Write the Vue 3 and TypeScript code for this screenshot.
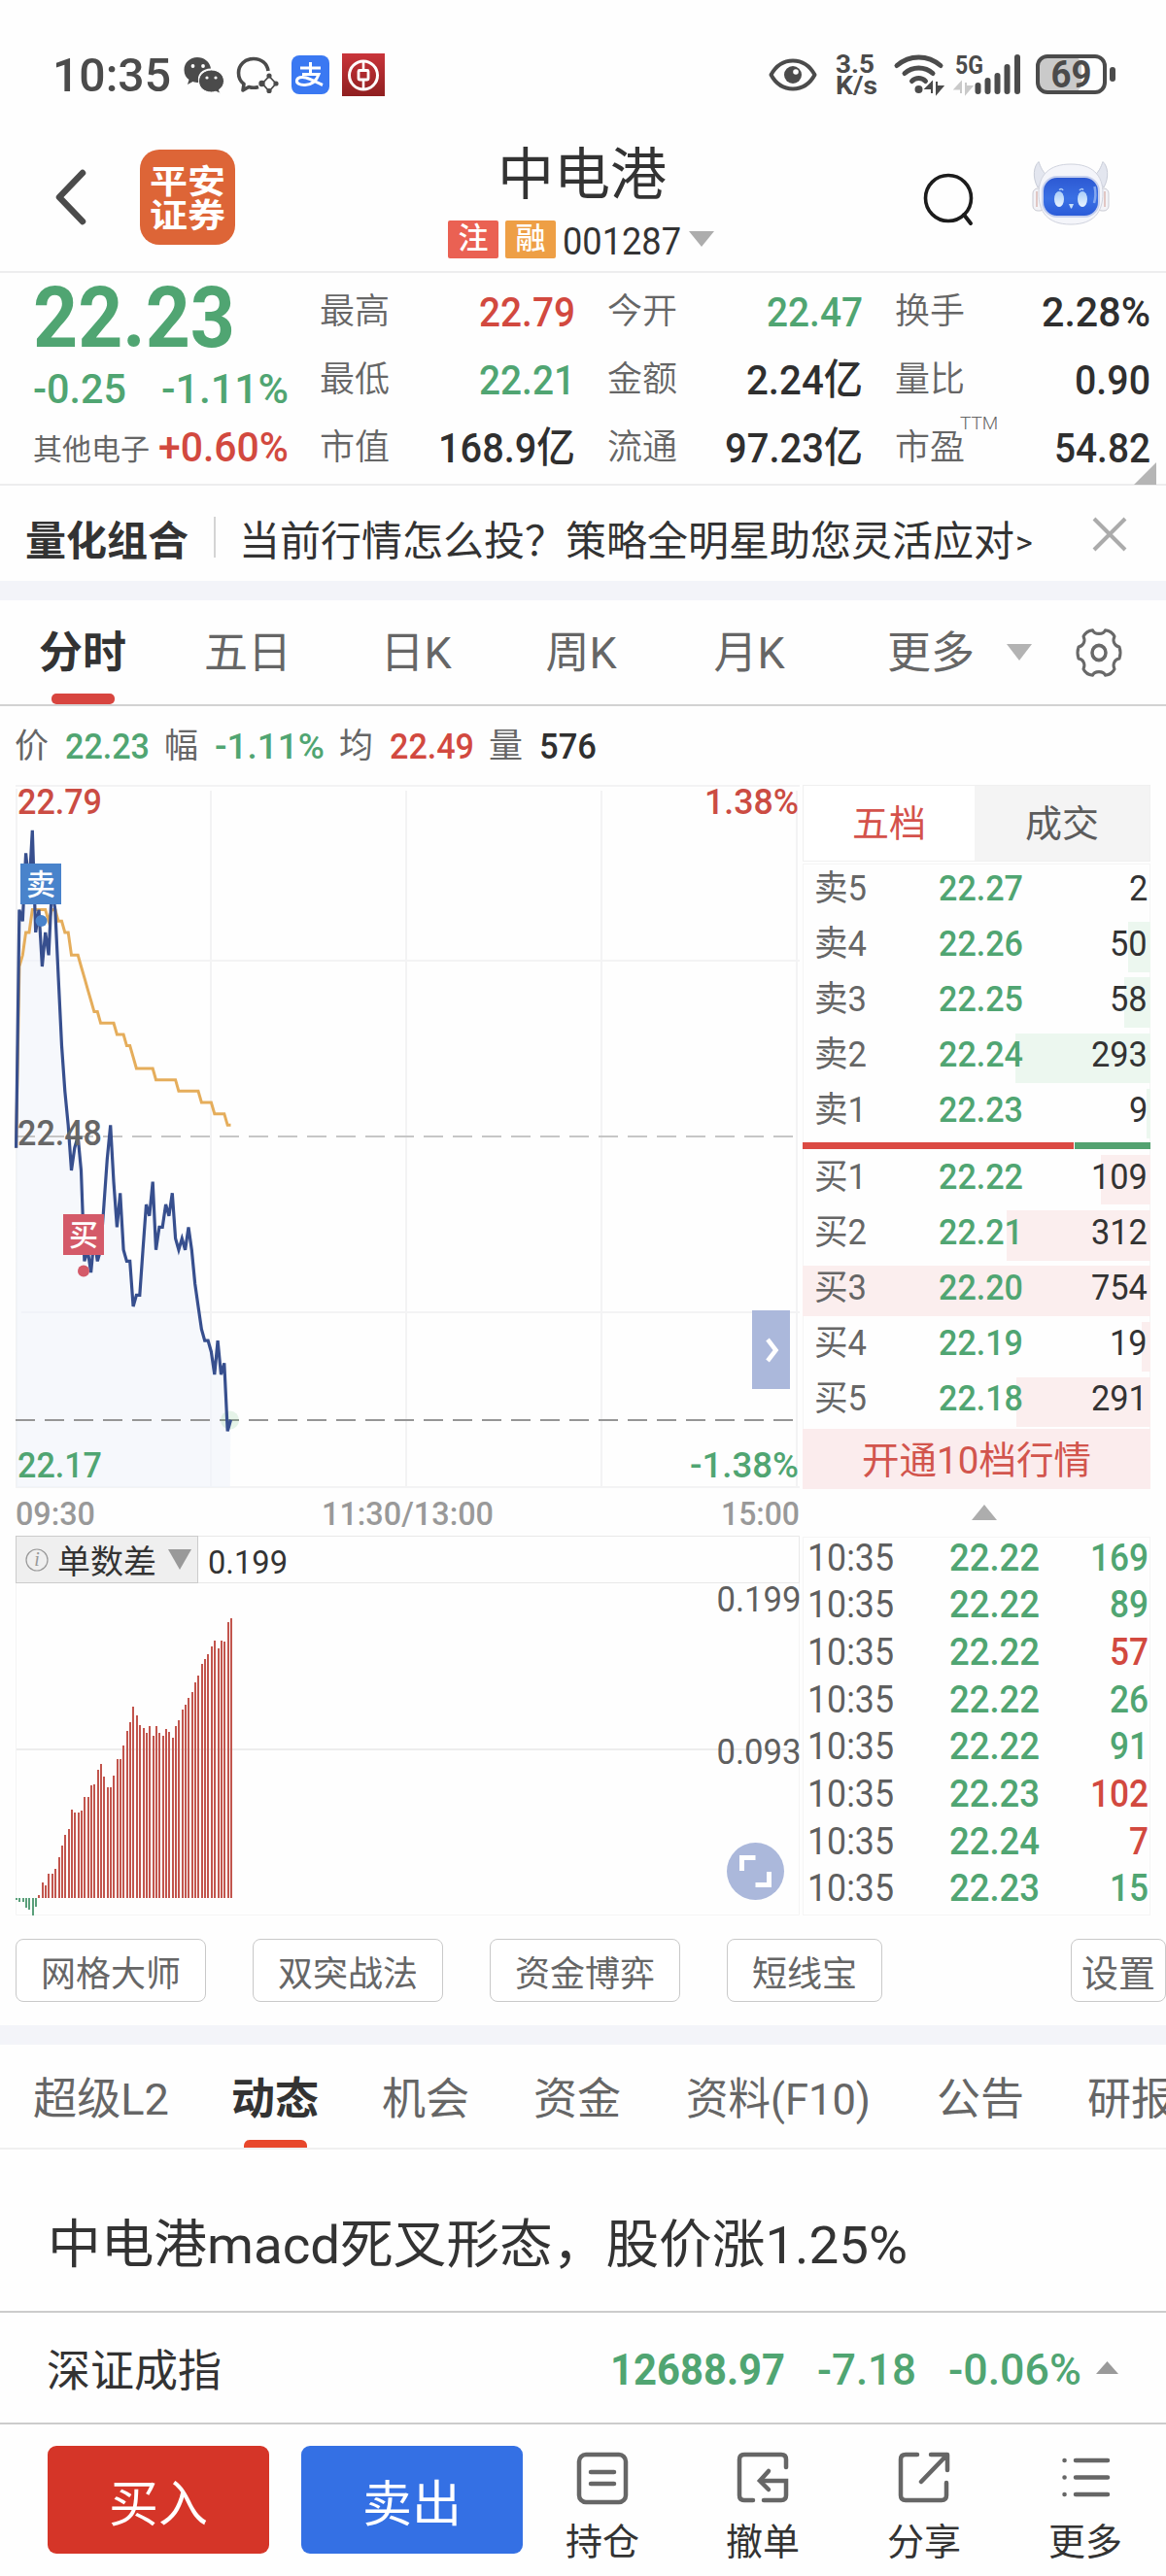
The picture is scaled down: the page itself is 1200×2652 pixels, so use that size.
<script setup lang="ts">
import type { Directive } from 'vue'

// Condenses a piece of text horizontally to a given advance width.
const vFit: Directive<HTMLElement, number> = {
  mounted(el, { value }) {
    const natural = el.getBoundingClientRect().width
    el.style.width = `${value}px`
    el.style.transform = `scaleX(${value / natural})`
  },
}

interface Stat { label: string; value: string; tone: string; w: number; sup?: string }
const stats: Stat[] = [
  { label: '最高', value: '22.79', tone: 'up', w: 99 },
  { label: '今开', value: '22.47', tone: 'down', w: 99 },
  { label: '换手', value: '2.28%', tone: 'ink', w: 112 },
  { label: '最低', value: '22.21', tone: 'down', w: 99 },
  { label: '金额', value: '2.24亿', tone: 'ink', w: 120 },
  { label: '量比', value: '0.90', tone: 'ink', w: 78 },
  { label: '市值', value: '168.9亿', tone: 'ink', w: 141 },
  { label: '流通', value: '97.23亿', tone: 'ink', w: 142 },
  { label: '市盈', value: '54.82', tone: 'ink', w: 99, sup: 'TTM' },
]

const x0 = 16.6
const step = 3.347
const yOf = (tick: number) => 1170 + (48 - tick) * 11.67

// One value per minute, in cents above 22.00.
const price = [
  47, 68, 67, 73, 70, 75, 66, 68, 63, 66, 64, 70, 68, 62, 56, 52, 49, 45, 47, 48, 45, 37, 38, 36,
  39, 37, 38, 42, 46, 49, 44, 40, 43, 38, 37, 37, 33, 34, 34, 38, 42, 41, 44, 38, 40, 40, 42, 41,
  43, 39, 38, 39, 38, 40, 38, 35, 33, 31, 30, 30, 29, 27, 30, 27, 28, 22, 23,
]
const average = [
  47, 63, 64, 66, 66, 68, 68, 68, 68, 68, 67, 68, 68, 67, 67, 66, 66, 64, 64, 64, 63, 62, 61, 60,
  59, 59, 58, 58, 58, 58, 58, 57, 57, 57, 56, 56, 55, 54, 54, 54, 54, 54, 54, 53, 53, 53, 53, 53,
  53, 53, 52, 52, 52, 52, 52, 52, 52, 51, 51, 51, 51, 50, 50, 50, 50, 49, 49,
]
const toPoints = (list: number[]) =>
  list.map((t, i) => `${(x0 + i * step).toFixed(1)},${yOf(t).toFixed(1)}`).join(' ')
const pricePoints = toPoints(price)
const averagePoints = toPoints(average)
const areaPoints = `${x0},1531 ${pricePoints} 236.7,1531`

// Bar heights of the order-count difference, in pixels; negative ones hang below the axis.
const diff = [
  -2, -4, -4, -10, -12, -18, -9, 3, 16, 13, 25, 25, 30, 42, 54, 65, 71, 91, 88, 88, 90, 104, 104,
  116, 117, 132, 138, 125, 114, 114, 126, 143, 143, 157, 172, 181, 197, 188, 178, 175, 170, 177,
  167, 177, 170, 167, 174, 171, 165, 177, 183, 194, 199, 206, 212, 222, 229, 241, 246, 251, 259,
  265, 257, 265, 264, 284, 288,
]
const bars = diff.map((h, i) => ({
  x: Math.round(x0 + i * step - 0.6),
  y: h > 0 ? 1954 - h : 1954,
  h: Math.abs(h),
  c: h > 0 ? '#c2554d' : '#5a9f7a',
}))

interface Level { name: string; price: string; qty: string; bar: number }
const sells: Level[] = [
  { name: '卖5', price: '22.27', qty: '2', bar: 0 },
  { name: '卖4', price: '22.26', qty: '50', bar: 23 },
  { name: '卖3', price: '22.25', qty: '58', bar: 27 },
  { name: '卖2', price: '22.24', qty: '293', bar: 139 },
  { name: '卖1', price: '22.23', qty: '9', bar: 4 },
]
const buys: Level[] = [
  { name: '买1', price: '22.22', qty: '109', bar: 51 },
  { name: '买2', price: '22.21', qty: '312', bar: 148 },
  { name: '买3', price: '22.20', qty: '754', bar: 358 },
  { name: '买4', price: '22.19', qty: '19', bar: 9 },
  { name: '买5', price: '22.18', qty: '291', bar: 138 },
]
const books = [
  { side: 'sell', rows: sells },
  { side: 'buy', rows: buys },
]

const trades = [
  { price: '22.22', qty: '169', tone: 'down' },
  { price: '22.22', qty: '89', tone: 'down' },
  { price: '22.22', qty: '57', tone: 'up' },
  { price: '22.22', qty: '26', tone: 'down' },
  { price: '22.22', qty: '91', tone: 'down' },
  { price: '22.23', qty: '102', tone: 'up' },
  { price: '22.24', qty: '7', tone: 'up' },
  { price: '22.23', qty: '15', tone: 'down' },
]

const tools = ['网格大师', '双突战法', '资金博弈', '短线宝']
</script>

<template>
  <div class="page">
    <div class="status">
      <span v-fit="122" class="clock">10:35</span>
      <svg class="s-wechat" width="42" height="38" viewBox="0 0 42 38">
        <path d="M14 1C6.500 1 .5 6.500 .5 14c0 4.500 2 8 5 10l-1.500 5 5.500-3c2 .6 3.500 1 6 1C13 19 19 12.500 28 12.500 27 5.500 21 1 14 1z" fill="#4b4b4b" />
        <path d="M28.500 14c-7.500 0-13 5-13 11.500S21 37 28.500 37c1.500 0 3-.2 4.500-.8l4.500 2-1-4c3-2 5-5 5-8.700C41.500 19 36 14 28.500 14z" fill="#4b4b4b" stroke="#fff" stroke-width="1" />
        <g fill="#fff"><circle cx="9.500" cy="10" r="1.900" /><circle cx="20" cy="10" r="1.900" /><circle cx="24" cy="22" r="1.600" /><circle cx="33" cy="22" r="1.600" /></g>
      </svg>
      <svg class="s-chat" width="44" height="38" viewBox="0 0 44 38">
        <path d="M33 15C32 7.500 26 2.500 18 2.500 9 2.500 2.500 9 2.500 17c0 5 2 9 5.500 11.500L7 35l6-3.500c4 1.200 7 1 10 0" fill="none" stroke="#4b4b4b" stroke-width="3.600" stroke-linejoin="round" />
        <path d="M34 20.500 41 28l-7 8-7-8z" fill="none" stroke="#4b4b4b" stroke-width="1.800" />
        <g fill="#4b4b4b"><circle cx="34" cy="20" r="2.600" /><circle cx="41" cy="28" r="2.600" /><circle cx="34" cy="35.500" r="2.600" /><circle cx="26.500" cy="28" r="3.200" /></g>
      </svg>
      <svg class="s-pay" width="39" height="40" viewBox="0 0 39 40">
        <rect width="39" height="40" rx="8" fill="#3a78f2" />
        <path d="M9 13h21M19.500 7v12M11 19.500h17c-2 6-6 10.500-14 11-6 .3-9-2-8.500-4.800C6 23 10 21.500 15 23c6 1.800 11 5 17 7.500" fill="none" stroke="#fff" stroke-width="3" />
      </svg>
      <svg class="s-bank" width="44" height="44" viewBox="0 0 44 44">
        <defs><linearGradient id="bk" x1="0" y1="0" x2="0" y2="1"><stop offset="0" stop-color="#c9343a" /><stop offset="1" stop-color="#8f1f20" /></linearGradient></defs>
        <rect width="44" height="44" fill="url(#bk)" />
        <circle cx="22" cy="22.500" r="14.500" fill="none" stroke="#fff" stroke-width="3" />
        <rect x="17" y="17.500" width="10" height="9.500" rx="1" fill="none" stroke="#fff" stroke-width="2.800" />
        <path d="M22 8v9M22 28v9" stroke="#fff" stroke-width="2.600" />
      </svg>
      <svg class="s-eye" width="50" height="34" viewBox="0 0 50 34">
        <path d="M2.500 17C8 7 16 2.500 25 2.500S42 7 47.500 17C42 27 34 31.500 25 31.500S8 27 2.500 17z" fill="none" stroke="#4b4b4b" stroke-width="4" stroke-linejoin="round" />
        <circle cx="25" cy="17" r="9" fill="#4b4b4b" /><circle cx="28" cy="14" r="2.800" fill="#fff" />
      </svg>
      <div class="speed"><span v-fit="40">3.5</span><span v-fit="43">K/s</span></div>
      <svg class="s-net" width="230" height="46" viewBox="920 54 230 46">
        <g fill="none" stroke="#4b4b4b" stroke-width="5" stroke-linecap="round">
          <path d="M924 67.500c13-11.500 32-11.500 45 0M932 75.500c8-7.500 21-7.500 29 0M939.500 83.500c4-4 10-4 14 0" />
        </g>
        <circle cx="946.500" cy="92" r="4" fill="#4b4b4b" />
        <path d="M960 84v12M960 85l-6 6h6zM965 84v12M965 96l6-7h-6z" fill="#4b4b4b" stroke="#4b4b4b" stroke-width="2" />
        <path d="M990 85v11M990 85l-6 6.500h6zM995 85v11M995 96l6-7h-6z" fill="#c9c9c9" stroke="#c9c9c9" stroke-width="2" />
        <text x="984" y="76" font-size="26" font-weight="700" textLength="29" lengthAdjust="spacingAndGlyphs" fill="#4b4b4b">5G</text>
        <g stroke="#4b4b4b" stroke-width="6" stroke-linecap="round"><path d="M1007.500 88v6M1017.500 83v11M1027.500 78v16M1037.500 69v25M1048 59v35" /></g>
        <rect x="1069" y="58" width="45" height="37" rx="9" fill="#cacaca" />
        <rect x="1069" y="58" width="69" height="37" rx="10" fill="none" stroke="#4b4b4b" stroke-width="4" />
        <rect x="1143" y="69" width="6" height="15" rx="3" fill="#4b4b4b" />
        <text x="1082.500" y="90" font-size="38" font-weight="700" textLength="42" lengthAdjust="spacingAndGlyphs" fill="#4b4b4b">69</text>
      </svg>
    </div>

    <header class="header">
      <svg class="back" width="36" height="62" viewBox="0 0 36 62"><path d="M30 6 6 31l24 25" fill="none" stroke="#4b4b4b" stroke-width="6.500" stroke-linecap="round" stroke-linejoin="round" /></svg>
      <div class="logo"><span v-fit="78">平安</span><span v-fit="78">证券</span></div>
      <div class="title">
        <h1>中电港</h1>
        <div class="code">
          <span class="tag red">注</span><span class="tag orange">融</span>
          <span v-fit="122" class="num">001287</span>
          <svg width="26" height="16" viewBox="0 0 26 16"><path d="M0 0h26L13 16z" fill="#adadad" /></svg>
        </div>
      </div>
      <svg class="search" width="54" height="56" viewBox="0 0 54 56"><circle cx="26" cy="27" r="23.500" fill="none" stroke="#1c1c1c" stroke-width="3.600" /><path d="m42 44 7 9" stroke="#1c1c1c" stroke-width="4" stroke-linecap="round" /></svg>
      <svg class="robot" width="80" height="68" viewBox="0 0 80 68">
        <defs>
          <linearGradient id="rb" x1="0" y1="0" x2="0" y2="1"><stop offset="0" stop-color="#2c58d2" /><stop offset=".55" stop-color="#3a70e4" /><stop offset="1" stop-color="#2a5ad8" /></linearGradient>
          <linearGradient id="ey" x1="0" y1="0" x2="0" y2="1"><stop offset="0" stop-color="#a9cdf8" /><stop offset="1" stop-color="#eaf4ff" /></linearGradient>
        </defs>
        <path d="M7 1.500C2 6 0 17 6 28l10-12C11 12 9 7 7 1.500zM73 1.500C78 6 80 17 74 28L64 16c5-4 7-9 9-14.500z" fill="#e3e6ef" stroke="#c9cdd8" />
        <rect x="1" y="29" width="12" height="23" rx="5" fill="#f3f3f7" stroke="#c9cad3" /><rect x="67" y="29" width="12" height="23" rx="5" fill="#f3f3f7" stroke="#c9cad3" />
        <path d="M5 32v16M75 32v16" stroke="#dcb9b4" stroke-width="1.500" />
        <path d="M40 4c22 0 33 11 33 30s-9 32-33 32S7 53 7 34 18 4 40 4z" fill="#f4f5fa" stroke="#d0d3de" />
        <rect x="11" y="17" width="58" height="41" rx="15" fill="url(#rb)" stroke="#c6d0ee" stroke-width="2" />
        <ellipse cx="28" cy="40" rx="5" ry="8" fill="url(#ey)" /><ellipse cx="52" cy="40" rx="5" ry="8" fill="url(#ey)" />
        <path d="M28 30.500q3-2 4 .5M49 31q2-2.500 4-.5" fill="none" stroke="#b4d1f8" stroke-width="1.500" /><path d="M38 45h5l-2 4.500h-1z" fill="#c5defa" />
        <path d="M64.500 27q2 9-.5 17" fill="none" stroke="#84a8f0" stroke-width="2.500" />
      </svg>
    </header>

    <section class="quote">
      <div class="main">
        <div class="big"><span v-fit="208" class="down">22.23</span></div>
        <div class="chg down"><span v-fit="96">-0.25</span><span v-fit="131">-1.11%</span></div>
        <div class="ind"><span class="sector">其他电子</span><span v-fit="134" class="up pct">+0.60%</span></div>
      </div>
      <div class="stats">
        <div v-for="s in stats" :key="s.label" class="stat">
          <span class="label">{{ s.label }}<sup v-if="s.sup">{{ s.sup }}</sup></span>
          <span v-fit="s.w" class="value" :class="s.tone">{{ s.value }}</span>
        </div>
      </div>
      <svg class="corner" width="23" height="23" viewBox="0 0 23 23"><path d="M23 0v23H0z" fill="#b5b5b5" /></svg>
    </section>

    <section class="promo">
      <strong>量化组合</strong><i></i>
      <span class="msg">当前行情怎么投？策略全明星助您灵活应对</span><span class="gt">&gt;</span>
      <svg width="36" height="36" viewBox="0 0 36 36"><path d="m2 2 32 32M34 2 2 34" stroke="#ababab" stroke-width="4" /></svg>
    </section>
    <div class="band"></div>

    <nav class="tabs">
      <span class="on">分时</span><span>五日</span><span>日K</span><span>周K</span><span>月K</span><span class="more">更多</span>
      <svg class="tri" width="26" height="17" viewBox="0 0 26 17"><path d="M0 0h26L13 17z" fill="#b3b3b3" /></svg>
      <svg class="gear" width="50" height="54" viewBox="0 0 50 50" preserveAspectRatio="none"><path d="M18.500 3.500C20 8 30 8 31.500 3.500 36 4 39.500 6.500 41 9.500 38.500 14 41 18.500 46 19.500c1.500 4 1.500 7 0 11-5 1-7.500 5.500-5 10-1.500 3-5 5.500-9.500 6-1.500-4.500-11.500-4.500-13 0-4.500-.5-8-3-9.500-6 2.500-4.500 0-9-5-10-1.500-4-1.500-7 0-11 5-1 7.500-5.500 5-10C10.500 6.500 14 4 18.500 3.500z" fill="none" stroke="#696969" stroke-width="3" stroke-linejoin="round" /><circle cx="25" cy="25" r="7" fill="none" stroke="#696969" stroke-width="3.500" /></svg>
    </nav>

    <div class="info">
      <span class="k k1">价</span><span v-fit="87" class="down">22.23</span>
      <span class="k k2">幅</span><span v-fit="113" class="down">-1.11%</span>
      <span class="k k2">均</span><span v-fit="87" class="up">22.49</span>
      <span class="k k2">量</span><span v-fit="59" class="ink">576</span>
    </div>

    <section class="market">
      <div class="charts">
        <svg width="824" height="773" viewBox="0 808 824 773">
          <g stroke="#f3f3f4" stroke-width="2" fill="none">
            <path d="M16 809h807M16 989h807M22 1351h801M16 1531h807" />
            <path d="M17 812v719M217 814v717M418 814v717M619 814v717M820 814v717" />
          </g>
          <polygon :points="areaPoints" fill="#f0f3fa" fill-opacity=".6" />
          <path d="M16 1170h804" stroke="#c6c6c6" stroke-width="2" stroke-dasharray="20 10" />
          <path d="M16 1462h804" stroke="#969696" stroke-width="2" stroke-dasharray="20 10" />
          <circle cx="236.500" cy="1462" r="9.500" fill="#5ab46e" fill-opacity=".15" />
          <polyline :points="averagePoints" fill="none" stroke="#e5ad5b" stroke-width="3" />
          <polyline :points="pricePoints" fill="none" stroke="#374f8e" stroke-width="3.200" />
          <g font-size="36.500" font-weight="500">
            <text x="18" y="838" textLength="87" lengthAdjust="spacingAndGlyphs" fill="#cb4c43">22.79</text>
            <text x="18" y="1179" textLength="87" lengthAdjust="spacingAndGlyphs" fill="#666">22.48</text>
            <text x="18" y="1521" textLength="87" lengthAdjust="spacingAndGlyphs" fill="#50a572">22.17</text>
            <text x="725" y="838" textLength="97" lengthAdjust="spacingAndGlyphs" fill="#cb4c43">1.38%</text>
            <text x="710" y="1521" textLength="112" lengthAdjust="spacingAndGlyphs" fill="#50a572">-1.38%</text>
          </g>
          <g font-size="33" font-weight="500" fill="#999">
            <text x="16" y="1570" textLength="82" lengthAdjust="spacingAndGlyphs">09:30</text>
            <text x="331" y="1570" textLength="177" lengthAdjust="spacingAndGlyphs">11:30/13:00</text>
            <text x="742" y="1570" textLength="81" lengthAdjust="spacingAndGlyphs">15:00</text>
          </g>
          <rect x="21" y="889" width="42" height="42" fill="#4983cb" />
          <circle cx="42.500" cy="948" r="6" fill="#4983cb" />
          <rect x="65" y="1250" width="42" height="42" fill="#d45a69" />
          <circle cx="86" cy="1308.500" r="6" fill="#d45a69" />
          <g font-size="30" font-weight="500" fill="#fff" text-anchor="middle"><text x="42" y="921">卖</text><text x="86" y="1282">买</text></g>
          <rect x="774" y="1349" width="39" height="81" fill="#abb8db" />
          <path d="m790 1379 8.500 11-8.500 11" fill="none" stroke="#fff" stroke-width="4.500" />
        </svg>
        <div class="indicator">
          <div class="pick">
            <svg width="24" height="24" viewBox="0 0 24 24"><circle cx="12" cy="12" r="11" fill="none" stroke="#999" stroke-width="1.200" /><text x="12" y="18" class="i" text-anchor="middle">i</text></svg>
            <span>单数差</span>
            <svg width="24" height="21" viewBox="0 0 24 21"><path d="M0 0h24L12 21z" fill="#999" /></svg>
          </div>
          <span v-fit="82" class="cur">0.199</span>
        </div>
        <svg width="824" height="343" viewBox="0 1630 824 343">
          <path d="M17 1801h806" stroke="#ededed" stroke-width="2" />
          <path d="M16.500 1630v341.500h806V1630" fill="none" stroke="#f4f4f4" />
          <rect v-for="(b, i) in bars" :key="i" :x="b.x" :y="b.y" width="2" :height="b.h" :fill="b.c" />
          <g font-size="36.500" fill="#5f5f5f">
            <text x="737.500" y="1658.500" textLength="87" lengthAdjust="spacingAndGlyphs">0.199</text>
            <text x="737.500" y="1815.500" textLength="87" lengthAdjust="spacingAndGlyphs">0.093</text>
          </g>
          <circle cx="777.500" cy="1926.500" r="29.500" fill="#abb8db" />
          <path d="M763.500 1926v-13.500h14M791.500 1927v13.500h-14" fill="none" stroke="#fff" stroke-width="5" />
        </svg>
      </div>

      <div class="side">
        <div class="seg"><span class="cur">五档</span><span>成交</span></div>
        <div class="book">
          <div v-for="b in books" :key="b.side" :class="b.side">
            <div v-for="r in b.rows" :key="r.name" class="level">
              <i class="depth" :style="{ width: r.bar + 'px' }"></i>
              <span v-fit="54" class="name">{{ r.name }}</span>
              <span v-fit="87" class="px down">{{ r.price }}</span>
              <span v-fit="r.qty.length * 19.300" class="qty">{{ r.qty }}</span>
            </div>
            <div v-if="b.side === 'sell'" class="ratio"><i></i><b></b></div>
          </div>
        </div>
        <div class="open">开通10档行情</div>
        <div class="fold"><svg width="26" height="16" viewBox="0 0 26 16"><path d="M13 0l13 16H0z" fill="#adadad" /></svg></div>
        <div class="trades">
          <div v-for="(t, i) in trades" :key="i" class="trade">
            <span v-fit="89" class="time">10:35</span>
            <span v-fit="93" class="px down">{{ t.price }}</span>
            <span v-fit="t.qty.length * 20" class="qty" :class="t.tone">{{ t.qty }}</span>
          </div>
        </div>
      </div>
    </section>

    <div class="tools">
      <button v-for="t in tools" :key="t">{{ t }}</button>
      <button class="set">设置</button>
    </div>
    <div class="band"></div>

    <nav class="feeds">
      <span><em v-fit="140">超级L2</em></span><span class="on">动态</span><span>机会</span><span>资金</span>
      <span><em v-fit="190">资料(F10)</em></span><span>公告</span><span>研报</span>
    </nav>

    <div class="news"><span v-fit="885">中电港macd死叉形态，股价涨1.25%</span></div>

    <div class="index">
      <span class="nm">深证成指</span>
      <b v-fit="180" class="c0">12688.97</b><span v-fit="102" class="c1">-7.18</span><span v-fit="137" class="c2">-0.06%</span>
      <svg width="23" height="13" viewBox="0 0 23 13"><path d="M11.500 0 23 13H0z" fill="#9a9a9a" /></svg>
    </div>

    <footer class="actions">
      <button class="buy-btn">买入</button><button class="sell-btn">卖出</button>
      <div class="act a1">
        <svg width="56" height="56" viewBox="0 0 56 56"><rect x="4" y="4" width="48" height="49" rx="7" /><path d="M16 22h24M16 34h24" stroke-linecap="round" /></svg><span>持仓</span>
      </div>
      <div class="act a2">
        <svg width="56" height="56" viewBox="0 0 56 56"><path d="M52 17V9q0-5-5-5H9Q4 4 4 9v37q0 5 5 5h9M29 51h18q5 0 5-5V31H26" stroke-linecap="round" /><path d="m34 21-9 10 9 9" stroke-linecap="round" /></svg><span>撤单</span>
      </div>
      <div class="act a3">
        <svg width="56" height="56" viewBox="0 0 56 56"><path d="M21 4H9Q4 4 4 9v37q0 5 5 5h37q5 0 5-5V33M35 4h17v16M51 5 25 32" stroke-linecap="round" stroke-linejoin="round" /></svg><span>分享</span>
      </div>
      <div class="act a4">
        <svg width="56" height="56" viewBox="0 0 56 56"><path d="M18 10h33M18 27.500h33M18 45h33M6.500 10h.1M6.500 27.500h.1M6.500 45h.1" stroke-linecap="round" /></svg><span>更多</span>
      </div>
    </footer>
  </div>
</template>

<style>
body { margin: 0; background: #fefefe; }
</style>

<style scoped>
.page {
  width: 1200px;
  height: 2652px;
  overflow: hidden;
  background: #fefefe;
  color: #333;
  font-family: Roboto, "Noto Sans CJK SC", sans-serif;
}
.page * { box-sizing: border-box; }
svg { display: block; flex: none; overflow: visible; }
span, b, em { display: inline-block; white-space: nowrap; flex: none; transform-origin: 0 50%; }
em { font-style: normal; }
button { font-family: inherit; padding: 0; white-space: nowrap; }
.up { color: #d2493f; }
.down { color: #50a572; }
.ink { color: #2f2f2f; }

.status { display: flex; align-items: center; height: 140px; padding: 14px 0 0 54px; color: #4b4b4b; }
.clock { font-size: 48px; font-weight: 500; line-height: 60px; margin-top: 2px; }
.s-wechat { margin-left: 13px; }
.s-chat { margin-left: 12px; }
.s-pay { margin-left: 13px; }
.s-bank { margin-left: 13px; }
.s-eye { margin-left: 395px; }
.speed { display: flex; flex-direction: column; margin-left: 19px; width: 59px; }
.speed span { font-size: 26px; font-weight: 700; line-height: 22px; align-self: flex-start; }
.s-net { margin-left: 0; }

.header { display: flex; align-items: flex-start; height: 141px; border-bottom: 2px solid #ededee; }
.back { margin: 32px 0 0 55px; }
.logo {
  display: flex; flex-direction: column; justify-content: center;
  width: 98px; height: 98px; margin: 14px 0 0 53px; padding: 3px 0 0 10px; border-radius: 20px;
  background: #dd6537; color: #fff; font-size: 34px; font-weight: 700;
}
.logo span { line-height: 35px; align-self: flex-start; }
.title { width: 278px; margin-left: 219px; }
h1 { margin: 9px 2px 0 0; font-size: 58px; font-weight: 400; line-height: 62px; text-align: center; }
.code { display: flex; align-items: center; height: 40px; margin-top: 15px; }
.tag { width: 52px; height: 39px; margin-right: 7px; border-radius: 2px; color: #fff; font-size: 31px; font-weight: 500; line-height: 38px; text-align: center; }
.tag.red { background: #ea6153; }
.tag.orange { background: #ee9f45; }
.num { font-size: 38px; line-height: 44px; margin-top: 5px; }
.code svg { margin-left: 8px; }
.search { margin: 37px 0 0 211px; }
.robot { margin: 25px 0 0 58px; }

.quote { position: relative; display: flex; height: 219px; border-bottom: 2px solid #ededee; }
.main { width: 329px; padding-left: 34px; }
.big { height: 90px; padding-top: 1px; font-size: 87px; font-weight: 700; line-height: 90px; }
.chg { display: flex; justify-content: space-between; width: 263px; height: 60px; font-size: 43px; font-weight: 500; line-height: 58px; }
.ind { display: flex; align-items: center; justify-content: space-between; width: 263px; height: 58px; }
.sector { color: #666; font-size: 30px; }
.pct { font-size: 43px; font-weight: 500; }
.stats { display: grid; grid-template-columns: repeat(3, 263px); column-gap: 33px; grid-auto-rows: 70px; padding-top: 5px; }
.stat { display: flex; justify-content: space-between; align-items: center; line-height: 70px; }
.label { position: relative; color: #666; font-size: 36px; font-weight: 350; }
.value { font-size: 43px; font-weight: 500; }
sup { position: absolute; left: 67px; top: -25px; font-size: 19px; font-weight: 300; line-height: 70px; }
.corner { position: absolute; right: 10px; top: 195px; }

.promo { display: flex; align-items: center; height: 98px; padding: 8px 0 0 26px; font-size: 42px; }
.promo strong { font-weight: 700; }
.promo i { width: 2px; height: 42px; margin: 0 24px 0 26px; background: #d4d4d4; }
.msg { width: 799px; }
.gt { width: 30px; font-size: 34px; margin-top: 10px; }
.promo svg { margin-left: 49px; margin-top: -7px; }
.band { height: 20px; background: #f3f4f9; }

.tabs {
  display: grid; grid-template-columns: 170px 170px 176px 164px 182px 174px 26px 1fr;
  align-items: center; height: 109px; border-bottom: 2px solid #d2d2d2; color: #666; font-size: 45px; text-align: center;
}
.tabs span { line-height: 109px; height: 107px; }
.tabs .on { position: relative; color: #333; font-weight: 700; }
.tabs .on::after { content: ""; position: absolute; left: 53px; bottom: 0; width: 65px; height: 11px; border-radius: 5px; background: #d8453f; }
.more { padding-left: 18px; }
.gear { margin-left: 44px; }

.info { display: flex; align-items: center; height: 81px; padding: 2px 0 0 15px; font-size: 36px; font-weight: 500; }
.info span { line-height: 80px; }
.info .k { width: 36px; color: #666; font-weight: 400; font-size: 35px; }
.info .k1 { margin-right: 16px; }
.info .k2 { margin: 0 16px 0 15px; }

.market { display: flex; height: 1165px; }
.charts { width: 824px; }
.charts text { font-family: Roboto, "Noto Sans CJK SC", sans-serif; }
.status text { font-family: Roboto, sans-serif; }
.indicator { display: flex; align-items: center; width: 807px; height: 49px; margin-left: 16px; border: 1px solid #e9e9e9; }
.pick { display: flex; align-items: center; width: 188px; height: 49px; margin-left: -1px; padding-left: 9px; border: 1px solid #ccc; background: #efefef; }
.pick span { width: 105px; margin: 0 9px; font-size: 34px; }
.pick .i { fill: #999; font: italic 20px "Liberation Serif", serif; }
.indicator .cur { margin-left: 10px; font-size: 33px; margin-top: 5px; }

.side { width: 358px; margin-left: 2px; }
.seg { display: flex; height: 79px; border: 1px solid #f0f0f0; font-size: 38px; line-height: 78px; text-align: center; }
.seg span { height: 77px; width: 180px; background: #f4f4f4; color: #5c5c5c; }
.seg .cur { width: 176px; background: #fff; color: #d4524b; }
.book { margin-top: 2px; height: 582px; border: solid #f5f5f5; border-width: 1px 1px 0; }
.level { position: relative; display: flex; align-items: center; height: 57.200px; margin: 0 -1px; padding: 0 3px 8px 12px; font-size: 36px; }
.level span { position: relative; line-height: 44px; }
.depth { position: absolute; right: 0; top: 2px; height: 51.500px; }
.sell .depth { background: #ecf7ef; }
.buy .depth { background: #fbeeee; }
.name { color: #666; }
.level .px { margin-left: 74px; font-weight: 500; }
.qty { margin-left: auto; font-weight: 450; }
.trade .qty { font-weight: 500; }
.ratio { display: flex; gap: 1px; height: 7px; margin: 0 -1px 4px; }
.ratio i { width: 279px; background: #db4a43; }
.ratio b { flex: 1; background: #53a270; }
.open { height: 62px; background: #fbeced; color: #d2554d; font-size: 38.500px; line-height: 66px; text-align: center; }
.fold { display: flex; justify-content: center; height: 49px; padding: 16px 0 0 16px; }
.trades { height: 390px; border: 1px solid #f5f5f5; }
.trade { display: flex; align-items: center; height: 48.650px; margin: 0 -1px; padding: 0 2px 7px 5px; font-size: 39px; }
.trade span { line-height: 46px; }
.time { color: #5f5f5f; }
.trade .px { margin-left: 57px; font-weight: 500; }

.tools { display: flex; align-items: flex-start; gap: 48px; height: 112px; padding: 23px 0 0 16px; }
.tools button { width: 196px; height: 65px; border: 1.500px solid #c9c9c9; border-radius: 8px; background: #fff; color: #666; font-size: 36px; }
.tools button:nth-child(4) { width: 160px; }
.tools .set { width: 98px; margin-left: auto; font-size: 38px; }

.feeds {
  display: grid; grid-template-columns: 204px 155px 156px 157px 258px 155px 90px;
  height: 108px; padding-left: 34px; overflow: hidden; border-bottom: 2px solid #f0f0f0; color: #666; font-size: 45px; line-height: 113px;
}
.feeds span { height: 106px; }
.feeds .on { position: relative; color: #333; font-weight: 700; }
.feeds .on::after { content: ""; position: absolute; left: 13px; bottom: 0; width: 65px; height: 8px; border-radius: 6px 6px 0 0; background: #e8472b; }

.news { height: 168px; padding-left: 49px; border-bottom: 2px solid #ccc; font-size: 54px; line-height: 197px; }
.index { display: flex; align-items: center; height: 115px; padding-left: 48px; border-bottom: 2px solid #ccc; color: #50a572; font-size: 44.500px; }
.nm { width: 580px; color: #333; font-size: 45px; }
.c0, .c1, .c2 { margin-top: 5px; }
.c1, .c2 { font-weight: 500; }
.c1 { margin-left: 33px; }
.c2 { margin-left: 33px; }
.index svg { margin-left: 15px; }

.actions { display: flex; padding: 22px 0 0 49px; }
.actions button { width: 228px; height: 111px; border: 0; border-radius: 9px; color: #fff; font-size: 51px; margin-right: 33px; }
.buy-btn { background: #d53528; }
.sell-btn { background: #3470e4; }
.act { display: flex; flex-direction: column; align-items: center; width: 80px; padding-top: 5px; font-size: 38px; line-height: 46px; }
.act svg { fill: none; stroke: #666; stroke-width: 4.500; margin-bottom: 15px; }
.a1 { margin-left: 9px; }
.a2 { margin-left: 85px; }
.a3 { margin-left: 86px; }
.a4 { margin-left: 86px; }
</style>
